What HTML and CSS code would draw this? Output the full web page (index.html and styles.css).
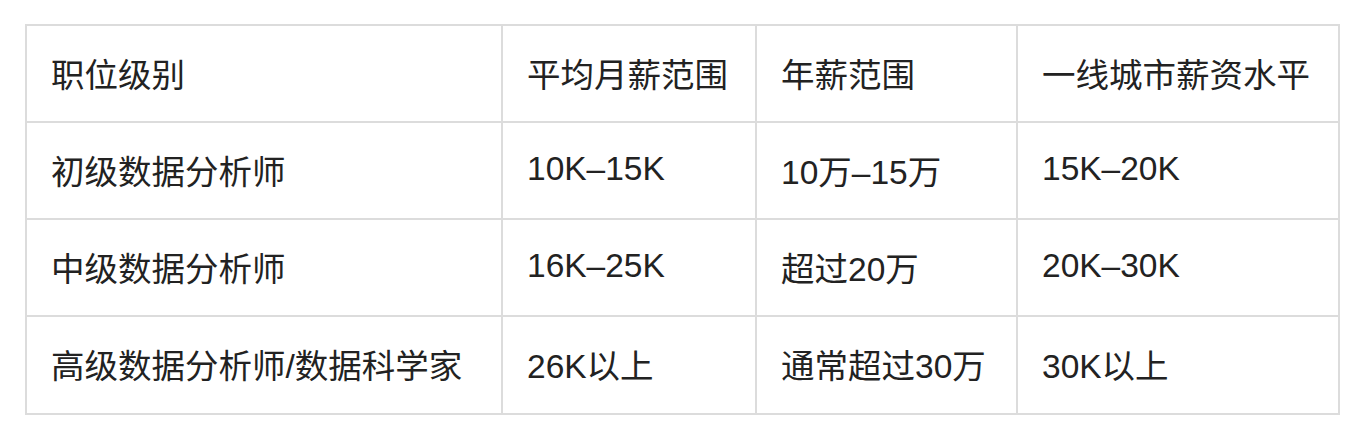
FILE: index.html
```html
<!DOCTYPE html>
<html lang="zh-CN">
<head>
<meta charset="utf-8">
<title>数据分析师薪资</title>
<link rel="stylesheet" href="styles.css">
</head>
<body>
<table class="salary">
  <colgroup>
    <col class="c1"><col class="c2"><col class="c3"><col class="c4">
  </colgroup>
  <thead>
    <tr><th>职位级别</th><th>平均月薪范围</th><th>年薪范围</th><th>一线城市薪资水平</th></tr>
  </thead>
  <tbody>
    <tr><td>初级数据分析师</td><td>10K–15K</td><td>10万–15万</td><td>15K–20K</td></tr>
    <tr><td>中级数据分析师</td><td>16K–25K</td><td>超过20万</td><td>20K–30K</td></tr>
    <tr><td>高级数据分析师/数据科学家</td><td>26K以上</td><td>通常超过30万</td><td>30K以上</td></tr>
  </tbody>
</table>
</body>
</html>
```
FILE: styles.css
```css
html, body {
  margin: 0;
  padding: 0;
  background: #ffffff;
}
body {
  padding: 24px 24px 0 25px;
  font-family: "Liberation Sans", "Noto Sans CJK SC", sans-serif;
  color: #222222;
}
.salary {
  border-collapse: collapse;
  table-layout: fixed;
  width: 1313px;
}
.c1 { width: 476px; }
.c2 { width: 254px; }
.c3 { width: 261px; }
.c4 { width: 322px; }
.salary th,
.salary td {
  border: 2px solid #dcdcdc;
  padding: 0 0 3px 24px;
  height: 92px;
  text-align: left;
  vertical-align: middle;
  font-weight: normal;
  font-size: 33.5px;
  white-space: nowrap;
}
.salary tbody tr:last-child td {
  height: 93px;
}
```
